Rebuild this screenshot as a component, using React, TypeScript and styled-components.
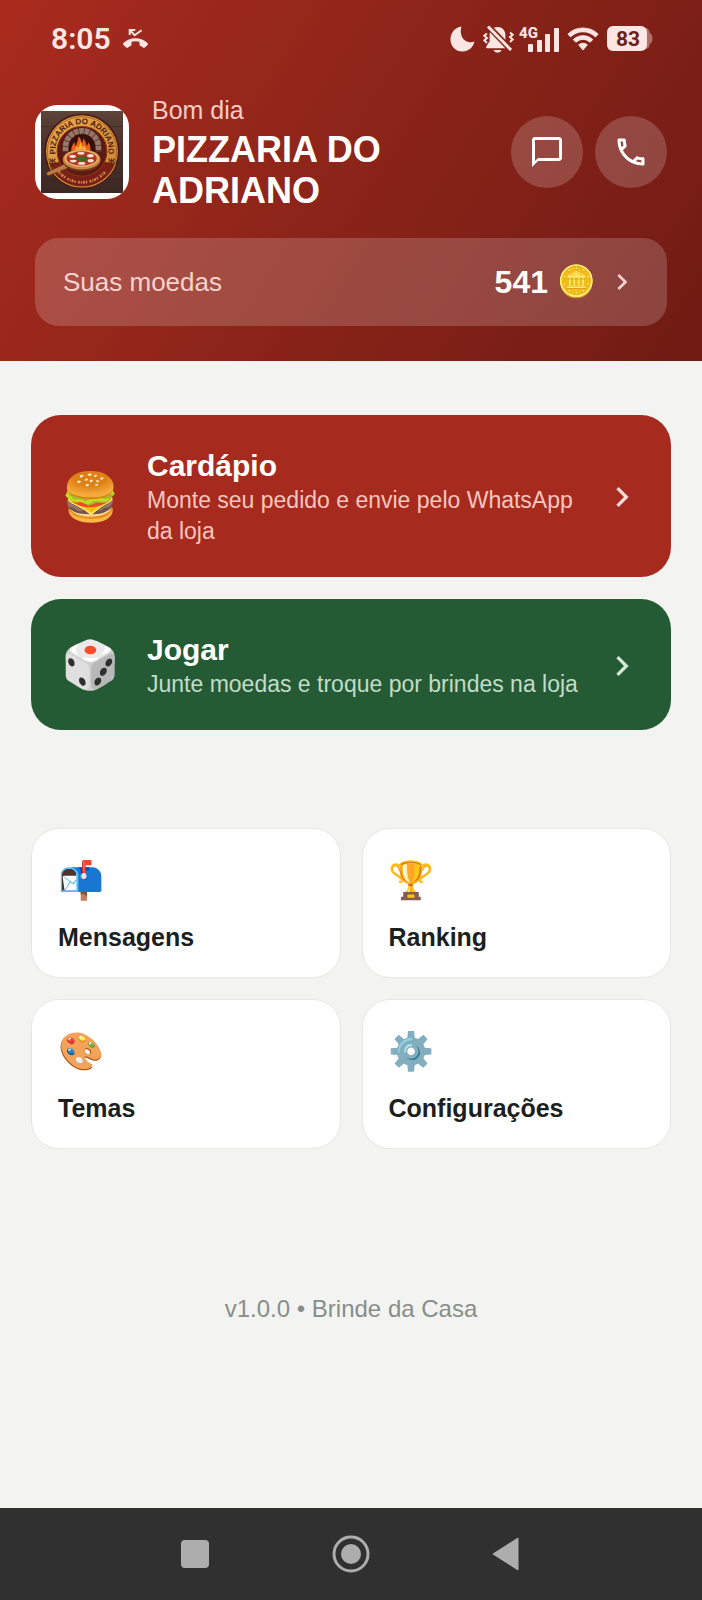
import React from 'react';
import {MdChatBubbleOutline, MdChevronRight, MdOutlineCall} from 'react-icons/md';
import styled, {createGlobalStyle} from 'styled-components';

const GlobalStyle = createGlobalStyle`
  * {
    box-sizing: border-box;
  }

  body {
    margin: 0;
    background: #f3f4f2;
    font-family: "Liberation Sans", Arial, sans-serif;
  }

  button {
    border: 0;
    padding: 0;
    font: inherit;
    color: inherit;
    text-align: left;
    cursor: pointer;
  }

  svg {
    display: block;
    flex: none;
  }
`;

const Page = styled.div`
  min-height: 100vh;
  display: flex;
  flex-direction: column;
`;

const Header = styled.header`
  padding: 0 35px 35px;
  background: linear-gradient(122deg, #a92b1e 0%, #8b2419 50%, #701b14 100%);
  color: #fff;
`;

const StatusBar = styled.div`
  display: flex;
  justify-content: space-between;
  align-items: center;
  height: 77px;
  padding: 0 14px 0 16px;
  color: #fbe6e3;
  font-family: Roboto, sans-serif;
`;

const StatusGroup = styled.div<{$gap: number}>`
  display: flex;
  align-items: center;
  gap: ${({$gap}) => $gap}px;
`;

const Clock = styled.span`
  font-size: 30px;
  font-weight: 600;
`;

const Store = styled.div`
  display: flex;
  align-items: center;
  padding-top: 16px;
  margin-bottom: 27px;
`;

const LogoFrame = styled.div`
  flex: none;
  padding: 6px;
  border-radius: 22px;
  background: #fff;
  overflow: hidden;
`;

const StoreText = styled.div`
  flex: 1;
  min-width: 0;
  padding: 2px 24px 0 23px;
`;

const Greeting = styled.div`
  margin-bottom: 4px;
  font-size: 25px;
  line-height: 30px;
  color: #f4cbc5;
`;

const StoreName = styled.h1`
  max-width: 300px;
  margin: 0;
  font-size: 36px;
  line-height: 41px;
`;

const Actions = styled.div`
  display: flex;
  gap: 12px;
`;

const RoundButton = styled.button`
  display: grid;
  place-items: center;
  width: 72px;
  height: 72px;
  border-radius: 50%;
  background: rgba(255, 255, 255, 0.18);
`;

const CoinsButton = styled.button`
  display: flex;
  align-items: center;
  gap: 12px;
  width: 100%;
  height: 88px;
  padding: 0 29px 0 28px;
  border-radius: 24px;
  background: rgba(255, 255, 255, 0.18);
`;

const CoinsLabel = styled.span`
  flex: 1;
  font-size: 26px;
  color: #f6d3ce;
`;

const CoinsValue = styled.span`
  font-size: 32px;
  font-weight: 700;
`;

const Content = styled.main`
  padding: 54px 31px 0;
`;

const FeatureList = styled.div`
  display: flex;
  flex-direction: column;
  gap: 22px;
  margin-bottom: 98px;
`;

const FeatureButton = styled.button<{$background: string}>`
  display: flex;
  align-items: center;
  padding: 32px 29px 30px 32px;
  border-radius: 30px;
  background: ${({$background}) => $background};
`;

const FeatureText = styled.span`
  flex: 1;
  padding: 0 10px 0 28px;
`;

const FeatureTitle = styled.span`
  display: block;
  font-size: 30px;
  line-height: 38px;
  font-weight: 700;
  color: #fff;
`;

const FeatureDescription = styled.span<{$color: string}>`
  display: block;
  font-size: 23px;
  line-height: 31px;
  color: ${({$color}) => $color};
`;

const TileGrid = styled.div`
  display: grid;
  grid-template-columns: 1fr 1fr;
  gap: 21px;
`;

const TileButton = styled.button`
  padding: 29px 26px 25px;
  border: 1px solid #e6e7e5;
  border-radius: 28px;
  background: #fff;
`;

const TileTitle = styled.span`
  display: block;
  margin-top: 18px;
  font-size: 25px;
  line-height: 30px;
  font-weight: 700;
  color: #1b1f1d;
`;

const Emoji = styled.span<{$box: number; $size: number}>`
  display: flex;
  flex: none;
  align-items: center;
  justify-content: center;
  width: ${({$box}) => $box}px;
  height: ${({$box}) => $box}px;
  padding-bottom: 2px;
  font-family: "Noto Color Emoji", sans-serif;
  font-size: ${({$size}) => $size}px;
  line-height: 1;
`;

const Version = styled.footer`
  padding: 145px 0 60px;
  font-size: 24px;
  line-height: 30px;
  text-align: center;
  color: #878e89;
`;

const NavBar = styled.nav`
  display: flex;
  justify-content: center;
  margin-top: auto;
  background: #303030;
`;

const NavButton = styled.button`
  display: grid;
  place-items: center;
  width: 156px;
  height: 92px;
  background: none;
`;

const MissedCallIcon = () => <svg width="25" height="20" viewBox="0 0 25 20">
  <path d="M6.7 6V1h5.6M7.2 1.4l4.4 4.8 7-5" fill="none" stroke="currentColor" strokeWidth="2"/>
  <path
    d="M12.5 9.2C7.8 9.2 3.6 11 .5 14c-.6.6-.6 1.3 0 1.9l2.6 2.5c.6.6 1.4.6 2 .1.8-.7 1.7-1.3 2.7-1.8.5-.3.7-.7.7-1.2v-2.7c2.6-.7 5.4-.7 8 0v2.7c0 .5.2.9.7 1.2 1 .5 1.9 1.1 2.7 1.8.6.5 1.4.5 2-.1l2.6-2.5c.6-.6.6-1.3 0-1.9-3.1-3-7.3-4.8-12-4.8z"
    fill="currentColor"
  />
</svg>;

const MoonIcon = () => <svg width="25" height="26" viewBox="0 0 25 26">
  <path
    d="M11.5.5C9.8 6 11.3 11.5 14.8 14.3c2.8 2.2 6.4 2.6 9.7 1.3C23.2 21.5 18.5 25.5 12.5 25.5 5.6 25.5.5 20.2.5 13.4.5 6.8 5 1.3 11.5.5z"
    fill="currentColor"
  />
</svg>;

const MutedBellIcon = () => <svg width="31" height="28" viewBox="0 0 31 28">
  <mask id="bell-cut">
    <path d="M0 0h31v28H0z" fill="#fff"/>
    <path d="M4 0l25 26" stroke="#000" strokeWidth="6"/>
  </mask>
  <path
    d="M14.5 2c4.6 0 7.9 3.5 7.9 8v6.3l3.4 5.2c.4.9 0 1.7-1 1.7H4.3c-1 0-1.5-.8-1-1.7l3.3-5.2V10c0-4.5 3.4-8 7.9-8z"
    fill="currentColor"
    mask="url(#bell-cut)"
  />
  <path d="M10.5 25h8c-.6 1.7-2 2.6-4 2.6s-3.4-.9-4-2.6z" fill="currentColor"/>
  <path d="M5 1.5l23 23.5" stroke="currentColor" strokeWidth="3"/>
  <path
    d="M4 8.5L1.3 10.7 4 13 1.3 15.4 4 18M27 7.5l2.7 2.2L27 12l2.7 2.4L27 17"
    fill="none"
    stroke="currentColor"
    strokeWidth="2"
  />
</svg>;

const SignalIcon = () => <svg width="40" height="28" viewBox="0 0 40 28">
  <text x="0" y="13" fontSize="15" fontWeight="800" fill="currentColor">4G</text>
  <g fill="currentColor">
    <rect x="9" y="19" width="5" height="8" rx="1"/>
    <rect x="18" y="15" width="5" height="12" rx="1"/>
    <rect x="26" y="9" width="5" height="18" rx="1"/>
    <rect x="35" y="3" width="5" height="24" rx="1"/>
  </g>
</svg>;

const WifiIcon = () => <svg width="32" height="24" viewBox="1 4 22 17">
  <path
    d="M1.5 9.1l1.7 1.7c4.9-4.7 12.7-4.7 17.6 0l1.7-1.7C16.6 3.3 7.4 3.3 1.5 9.1zm7.6 7.5l2.9 3.4 2.9-3.4c-1.6-1.5-4.2-1.5-5.8 0zM5.3 12.9L7 14.6c2.8-2.6 7.2-2.6 10 0l1.7-1.7c-3.8-3.6-9.6-3.6-13.4 0z"
    fill="currentColor"
    stroke="currentColor"
    strokeWidth="0.8"
    strokeLinejoin="round"
  />
</svg>;

const BatteryIcon = () => <svg width="46" height="25" viewBox="0 0 46 25">
  <path d="M38 2h1c2.5 0 3.3 2.5 3.8 5 1.7.5 2.7 2.8 2.7 5.5s-1 5-2.7 5.5c-.5 2.5-1.3 5-3.8 5h-1z" fill="#b06f69"/>
  <rect width="40" height="25" rx="6" fill="currentColor"/>
  <text x="21" y="20" fontSize="21" fontWeight="700" textAnchor="middle" fill="#6b2019">83</text>
</svg>;

const StoreLogo = () => <svg width="82" height="82" viewBox="0 0 244 244" role="img" aria-label="Pizzaria do Adriano">
  <defs>
    <linearGradient id="wood" x1="0" y1="0" x2="0" y2="1">
      <stop offset="0" stopColor="#5d4339"/>
      <stop offset="0.5" stopColor="#46302a"/>
      <stop offset="1" stopColor="#3c2823"/>
    </linearGradient>
    <linearGradient id="gold" x1="0" y1="0" x2="1" y2="1">
      <stop offset="0" stopColor="#e9ab4c"/>
      <stop offset="1" stopColor="#cd8433"/>
    </linearGradient>
    <path id="name-arc" d="M46 139A79 79 0 1 1 198 139"/>
  </defs>
  <rect width="244" height="244" fill="url(#wood)"/>
  <path d="M0 46h244M0 98h244M0 152h244M0 204h244" stroke="#3b2722" strokeWidth="2"/>
  <circle cx="122" cy="120" r="112" fill="#4d1710"/>
  <circle cx="122" cy="120" r="107" fill="url(#gold)"/>
  <circle cx="122" cy="120" r="103" fill="none" stroke="#8d4a1d" strokeWidth="2"/>
  <path d="M23 160A107 107 0 0 0 221 160L188 150 56 150z" fill="#7c1f16"/>
  <path d="M23 160A107 107 0 0 0 221 160" fill="none" stroke="#d4923c" strokeWidth="3"/>
  <circle cx="122" cy="120" r="74" fill="#5b1a12" stroke="#8a3517" strokeWidth="3"/>
  <path d="M73 120V108a49 49 0 0 1 98 0v12" fill="none" stroke="#93796c" strokeWidth="17" strokeDasharray="14 2"/>
  <path d="M83 126V108a39 39 0 0 1 78 0v18z" fill="#35100c"/>
  <path d="M91 122c-3-14 4-22 8-30 2 7 2 9 5 12 2-11 8-17 7-28 8 6 9 14 11 20 3-6 2-10 6-15 1 9 7 14 8 23 4-4 4-7 5-11 6 9 9 19 4 29z" fill="#ea5f1b"/>
  <path d="M101 122c-1-9 3-13 6-18 2 4 3 5 5 6 1-7 4-12 5-18 5 8 5 13 7 18 2-3 3-6 4-8 5 7 8 13 5 20z" fill="#fcb42c"/>
  <path d="M78 154L20 181c-7 5-3 14 6 10l64-25z" fill="#bd7a43" stroke="#5e2c14" strokeWidth="2"/>
  <ellipse cx="121" cy="149" rx="56" ry="31" fill="#713516"/>
  <ellipse cx="121" cy="144" rx="56" ry="30" fill="#c98446"/>
  <ellipse cx="121" cy="141" rx="51" ry="26" fill="#e4b06c"/>
  <ellipse cx="121" cy="141" rx="45" ry="21" fill="#b83220"/>
  <g fill="#f4e5ce">
    <ellipse cx="94" cy="135" rx="10" ry="5"/>
    <ellipse cx="119" cy="126" rx="11" ry="4"/>
    <ellipse cx="147" cy="133" rx="10" ry="5"/>
    <ellipse cx="96" cy="149" rx="10" ry="4"/>
    <ellipse cx="121" cy="156" rx="11" ry="4"/>
    <ellipse cx="148" cy="148" rx="9" ry="5"/>
  </g>
  <path d="M101 141l13-7 8 4 8-6 3 6 10 1-9 5 3 6-12-3-8 5-4-6z" fill="#3c6b28"/>
  <path d="M52 180A92 92 0 0 0 192 180" fill="none" stroke="#c98a4c" strokeWidth="8" strokeDasharray="5 3 3 3 6 3 4 7"/>
  <path
    d="M34 163V141M26 142c1 6 4 8 8 9 4-1 7-3 8-9M25 151c2 6 5 7 9 8 4-1 7-2 9-8M210 163V141M202 142c1 6 4 8 8 9 4-1 7-3 8-9M201 151c2 6 5 7 9 8 4-1 7-2 9-8"
    fill="none"
    stroke="#5b2812"
    strokeWidth="4"
  />
  <text fontSize="24" fontWeight="700" fill="#4b1b10" textAnchor="middle">
    <textPath href="#name-arc" startOffset="50%">PIZZARIA DO ADRIANO</textPath>
  </text>
</svg>;

const features = [
  {
    emoji: '🍔',
    title: 'Cardápio',
    description: 'Monte seu pedido e envie pelo WhatsApp da loja',
    background: '#a62b1e',
    textColor: '#f5c6bf',
    arrowColor: '#f8dad6'
  },
  {
    emoji: '🎲',
    title: 'Jogar',
    description: 'Junte moedas e troque por brindes na loja',
    background: '#245b34',
    textColor: '#c2dcc8',
    arrowColor: '#d3e9d8'
  }
];

const tiles = [
  {emoji: '📬', title: 'Mensagens'},
  {emoji: '🏆', title: 'Ranking'},
  {emoji: '🎨', title: 'Temas'},
  {emoji: '⚙️', title: 'Configurações'}
];

const App = () => <Page>
  <GlobalStyle/>
  <Header>
    <StatusBar>
      <StatusGroup $gap={12}>
        <Clock>8:05</Clock>
        <MissedCallIcon/>
      </StatusGroup>
      <StatusGroup $gap={8}>
        <MoonIcon/>
        <StatusGroup $gap={5}>
          <MutedBellIcon/>
          <SignalIcon/>
        </StatusGroup>
        <WifiIcon/>
        <BatteryIcon/>
      </StatusGroup>
    </StatusBar>
    <Store>
      <LogoFrame><StoreLogo/></LogoFrame>
      <StoreText>
        <Greeting>Bom dia</Greeting>
        <StoreName>PIZZARIA DO ADRIANO</StoreName>
      </StoreText>
      <Actions>
        <RoundButton aria-label="Conversar"><MdChatBubbleOutline size={36}/></RoundButton>
        <RoundButton aria-label="Ligar"><MdOutlineCall size={36}/></RoundButton>
      </Actions>
    </Store>
    <CoinsButton>
      <CoinsLabel>Suas moedas</CoinsLabel>
      <CoinsValue>541</CoinsValue>
      <Emoji $box={34} $size={31}>🪙</Emoji>
      <MdChevronRight size={32} color="#f6d3ce"/>
    </CoinsButton>
  </Header>
  <Content>
    <FeatureList>
      {features.map(feature => <FeatureButton key={feature.title} $background={feature.background}>
        <Emoji $box={56} $size={47}>{feature.emoji}</Emoji>
        <FeatureText>
          <FeatureTitle>{feature.title}</FeatureTitle>
          <FeatureDescription $color={feature.textColor}>{feature.description}</FeatureDescription>
        </FeatureText>
        <MdChevronRight size={40} color={feature.arrowColor}/>
      </FeatureButton>)}
    </FeatureList>
    <TileGrid>
      {tiles.map(tile => <TileButton key={tile.title}>
        <Emoji $box={46} $size={37}>{tile.emoji}</Emoji>
        <TileTitle>{tile.title}</TileTitle>
      </TileButton>)}
    </TileGrid>
    <Version>v1.0.0 • Brinde da Casa</Version>
  </Content>
  <NavBar>
    <NavButton aria-label="Recentes">
      <svg width="28" height="28"><rect width="28" height="28" rx="4" fill="#adadad"/></svg>
    </NavButton>
    <NavButton aria-label="Início">
      <svg width="38" height="38">
        <circle cx="19" cy="19" r="17" fill="none" stroke="#adadad" strokeWidth="3"/>
        <circle cx="19" cy="19" r="10" fill="#adadad"/>
      </svg>
    </NavButton>
    <NavButton aria-label="Voltar">
      <svg width="30" height="34"><path d="M1 17L26 1v32z" fill="#adadad" stroke="#adadad" strokeLinejoin="round"/></svg>
    </NavButton>
  </NavBar>
</Page>;

export default App;
